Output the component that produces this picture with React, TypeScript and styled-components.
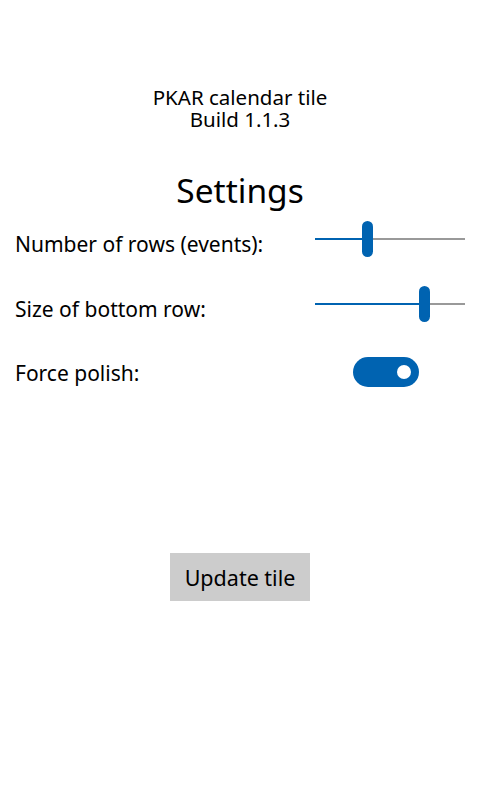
import React from "react";
import styled, { createGlobalStyle } from "styled-components";

const Global = createGlobalStyle`
  html, body { margin: 0; padding: 0; background: #fff; }
  body { font-family: "Noto Sans", "Open Sans", sans-serif; color: #000; }
`;

const Page = styled.div`
  width: 480px;
  height: 800px;
  display: flex;
  flex-direction: column;
  align-items: stretch;
  box-sizing: border-box;
  padding-top: 86px;
`;

const Header = styled.div`
  display: flex;
  flex-direction: column;
  align-items: center;
  font-size: 20.5px;
  line-height: 22px;
`;

const Heading = styled.h1`
  margin: 40px 0 0;
  text-align: center;
  font-weight: 400;
  font-size: 33.5px;
  line-height: 40px;
`;

const Rows = styled.div`
  display: flex;
  flex-direction: column;
`;

const Row = styled.div<{ $h: number }>`
  display: flex;
  align-items: center;
  height: ${(p) => p.$h}px;
  padding-left: 15px;
`;

const Label = styled.div<{ $drop?: number }>`
  width: 300px;
  font-size: 21px;
  margin-top: ${(p) => (p.$drop ?? 0) * 2}px;
`;

const SliderTrack = styled.div`
  width: 150px;
  height: 36px;
  display: flex;
  align-items: center;
`;

const Fill = styled.div`
  height: 2px;
  background: #0063b1;
`;

const Rest = styled.div`
  height: 2px;
  flex: 1;
  background: #999;
`;

const Thumb = styled.div`
  width: 11px;
  height: 36px;
  border-radius: 6px;
  background: #0063b1;
  flex: none;
`;

const ToggleWrap = styled.div`
  margin-left: 38px;
  width: 66px;
  height: 30px;
  border-radius: 15px;
  background: #0063b1;
  display: flex;
  align-items: center;
  justify-content: flex-end;
  padding-right: 8px;
  box-sizing: border-box;
`;

const Knob = styled.div`
  width: 14px;
  height: 14px;
  border-radius: 50%;
  background: #fff;
`;

const ButtonArea = styled.div`
  display: flex;
  justify-content: center;
  margin-top: 149px;
`;

const Button = styled.button`
  width: 140px;
  height: 48px;
  border: none;
  background: #ccc;
  font-family: inherit;
  font-size: 21.5px;
  color: #000;
  padding: 0;
`;

function Slider({ value }: { value: number }) {
  const w = Math.round(139 * value);
  return (
    <SliderTrack>
      <Fill style={{ width: w }} />
      <Thumb />
      <Rest />
    </SliderTrack>
  );
}

export default function App() {
  return (
    <Page>
      <Global />
      <Header>
        <div>PKAR calendar tile</div>
        <div>Build 1.1.3</div>
      </Header>
      <Heading>Settings</Heading>
      <Rows>
        <Row $h={58}>
          <Label $drop={5}>Number of rows (events):</Label>
          <Slider value={0.34} />
        </Row>
        <Row $h={72}>
          <Label $drop={5}>Size of bottom row:</Label>
          <Slider value={0.75} />
        </Row>
        <Row $h={64}>
          <Label $drop={1}>Force polish:</Label>
          <ToggleWrap>
            <Knob />
          </ToggleWrap>
        </Row>
      </Rows>
      <ButtonArea>
        <Button>Update tile</Button>
      </ButtonArea>
    </Page>
  );
}
